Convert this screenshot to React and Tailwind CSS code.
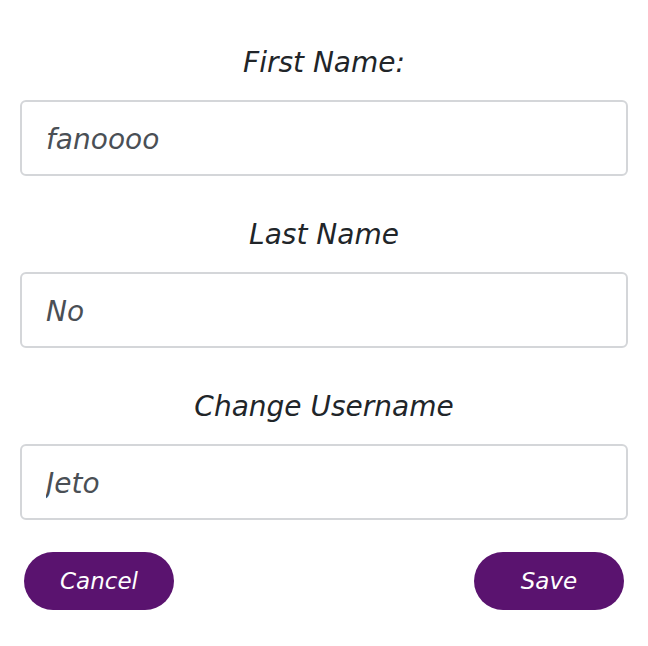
import React from 'react';

const fields = [
  { label: 'First Name:', value: 'fanoooo' },
  { label: 'Last Name', value: 'No' },
  { label: 'Change Username', value: 'Jeto' },
];

export default function App() {
  return (
    <div className="min-h-screen bg-white px-5 pt-[43px] italic" style={{ fontFamily: '"DejaVu Sans", "Noto Sans", sans-serif' }}>
      {fields.map((field, i) => (
        <div key={field.label} className={i > 0 ? 'mt-[39px]' : ''}>
          <label className="block h-9 text-center text-[28px] leading-[40px] text-[#212529]">
            {field.label}
          </label>
          <input
            type="text"
            defaultValue={field.value}
            className="mt-[21px] block h-[76px] w-full rounded-md border-2 border-[#d4d6d9] px-6 pt-[3px] text-[28px] italic text-[#4a4f55] outline-none"
          />
        </div>
      ))}

      {/* Actions */}
      <div className="mt-8 flex justify-between px-1">
        <button className="h-[58px] w-[150px] rounded-full bg-[#5a136f] text-[23px] italic text-white">
          Cancel
        </button>
        <button className="h-[58px] w-[150px] rounded-full bg-[#5a136f] text-[23px] italic text-white">
          Save
        </button>
      </div>
    </div>
  );
}
